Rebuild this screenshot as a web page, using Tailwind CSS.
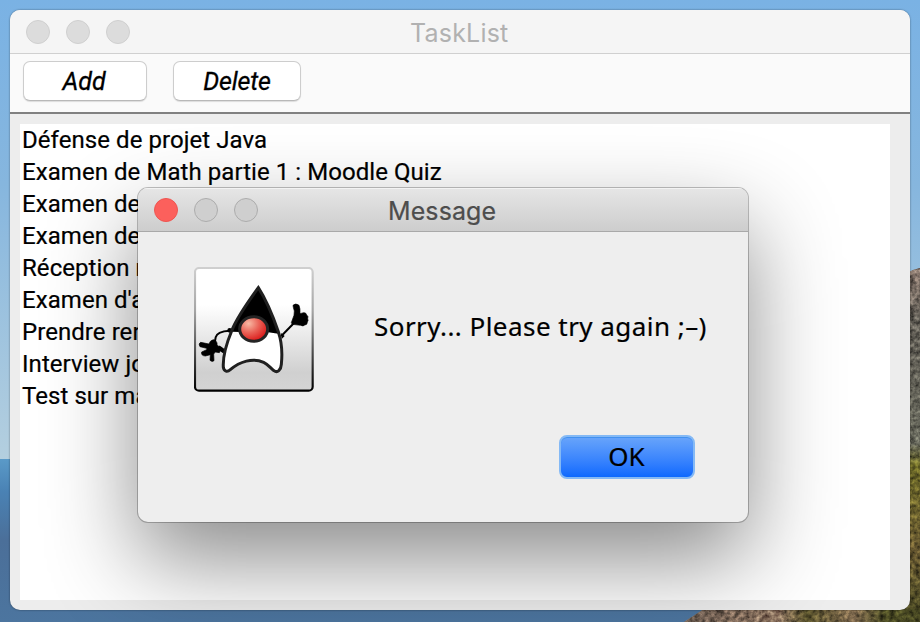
<!DOCTYPE html>
<html lang="fr">
<head>
<meta charset="utf-8">
<title>TaskList</title>
<script src="https://cdn.jsdelivr.net/npm/@tailwindcss/browser@4"></script>
</head>
<body class="w-[920px] h-[622px] overflow-hidden font-[Roboto,sans-serif] text-black">
<div class="relative w-[920px] h-[622px] overflow-hidden p-[10px]">
  <!-- desktop wallpaper -->
  <svg class="absolute inset-0" width="920" height="622" viewBox="0 0 920 622">
    <defs>
      <linearGradient id="sky" x1="0" y1="0" x2="0" y2="1"><stop offset="0" stop-color="#7ab2e4"/><stop offset=".4" stop-color="#86b6de"/><stop offset="1" stop-color="#b4cfdf"/></linearGradient>
      <linearGradient id="sea" x1="0" y1="0" x2="0" y2="1"><stop offset="0" stop-color="#5a9ac8"/><stop offset=".2" stop-color="#4a82b4"/><stop offset=".5" stop-color="#4b6f99"/><stop offset="1" stop-color="#4c759f"/></linearGradient>
      <linearGradient id="hill" gradientUnits="userSpaceOnUse" x1="0" y1="265" x2="0" y2="622"><stop offset="0" stop-color="#86746a"/><stop offset=".15" stop-color="#625e56"/><stop offset=".5" stop-color="#65665a"/><stop offset=".56" stop-color="#696626"/><stop offset=".8" stop-color="#65562f"/><stop offset="1" stop-color="#4c4c24"/></linearGradient>
      <linearGradient id="cliff"><stop offset="0" stop-color="#6b5b50"/><stop offset=".4" stop-color="#8d7460"/><stop offset=".52" stop-color="#59522c"/><stop offset=".72" stop-color="#7a654b"/><stop offset=".85" stop-color="#484822"/><stop offset="1" stop-color="#484822"/></linearGradient>
      <filter id="grain" x="0" y="0" width="1" height="1" color-interpolation-filters="sRGB"><feTurbulence type="fractalNoise" baseFrequency=".2" numOctaves="4" seed="4"/><feColorMatrix values=".8 0 0 0 .1  .8 0 0 0 .1  .8 0 0 0 .1  0 0 0 0 1"/><feComposite in2="SourceGraphic" operator="in" result="n"/><feBlend in="n" in2="SourceGraphic" mode="overlay"/></filter>
    </defs>
    <rect width="920" height="460" fill="url(#sky)"/>
    <rect y="459" width="920" height="163" fill="url(#sea)"/>
    <path d="M905 274L913 270 920 268V622H905z" fill="url(#hill)" filter="url(#grain)"/>
    <path d="M684 622L704 609H920V622z" fill="url(#cliff)" filter="url(#grain)"/>
  </svg>

  <!-- main window -->
  <main class="relative flex h-[600px] w-[900px] flex-col overflow-hidden rounded-[10px] bg-[#ededed] shadow-[0_0_2px_rgba(0,0,0,.5)]">
    <header class="flex h-[44px] shrink-0 items-center border-b border-[#d0d0d0] bg-[#f5f5f5] pl-[16px]">
      <div class="flex gap-[16px]">
        <i class="size-[24px] rounded-full border border-[#cfcfcf] bg-[#dcdcdc]"></i>
        <i class="size-[24px] rounded-full border border-[#cfcfcf] bg-[#dcdcdc]"></i>
        <i class="size-[24px] rounded-full border border-[#cfcfcf] bg-[#dcdcdc]"></i>
      </div>
      <h1 class="ml-[280px] mt-[3px] whitespace-nowrap font-[Inter,sans-serif] text-[25px] leading-[30px] tracking-[0.2px] text-[#b1b1b1]">TaskList</h1>
    </header>
    <nav class="flex h-[60px] shrink-0 gap-[26px] border-b-2 border-[#808080] bg-[#fafafa] pl-[13px] pt-[7px]">
      <button class="h-[40px] w-[124px] rounded-[7px] border border-[#cdcdcd] border-b-[#b8b8b8] bg-white pt-px pr-[2px] text-[25px] italic leading-[38px] shadow-[0_1px_1px_rgba(0,0,0,.12)] [-webkit-text-stroke:0.3px_#000]">Add</button>
      <button class="h-[40px] w-[128px] rounded-[7px] border border-[#cdcdcd] border-b-[#b8b8b8] bg-white pt-px text-[25px] italic leading-[38px] tracking-[-0.1px] shadow-[0_1px_1px_rgba(0,0,0,.12)] [-webkit-text-stroke:0.3px_#000]">Delete</button>
    </nav>
    <ul class="mt-[10px] ml-[10px] h-[476px] w-[870px] overflow-hidden whitespace-nowrap bg-white pl-[2px] text-[24px] leading-[32px] tracking-[0.06px] [-webkit-text-stroke:0.2px_#000]">
      <li>Défense de projet Java</li>
      <li>Examen de Math partie 1 : Moodle Quiz</li>
      <li>Examen de</li>
      <li>Examen de</li>
      <li>Réception n</li>
      <li>Examen d'a</li>
      <li>Prendre ren</li>
      <li>Interview jo</li>
      <li>Test sur ma</li>
    </ul>
  </main>

  <!-- message dialog -->
  <section class="absolute left-[138px] top-[188px] flex h-[334px] w-[610px] flex-col overflow-hidden rounded-[10px] bg-[#eee] shadow-[0_0_0_1px_rgba(0,0,0,.24),0_38px_90px_rgba(0,0,0,.46)]">
    <header class="flex h-[44px] shrink-0 items-center border-b border-[#a9a9a9] bg-linear-to-b from-[#e6e6e6] to-[#cdcdcd] pl-[16px] shadow-[inset_0_1px_0_#f3f3f3]">
      <div class="flex gap-[16px]">
        <i class="size-[24px] rounded-full border border-[#ee5551] bg-[#fc605c]"></i>
        <i class="size-[24px] rounded-full border border-[#acacac] bg-[#cfcfcf]"></i>
        <i class="size-[24px] rounded-full border border-[#acacac] bg-[#cfcfcf]"></i>
      </div>
      <h2 class="ml-[130px] mt-[3px] whitespace-nowrap font-[Inter,sans-serif] text-[25px] leading-[30px] tracking-[0.1px] text-[#4d4d4d] [-webkit-text-stroke:0.2px_#4d4d4d]">Message</h2>
    </header>
    <div class="flex pl-[56px] pt-[35px]">
      <svg class="shrink-0" width="120" height="125" viewBox="42 36 360 375">
        <defs>
          <linearGradient id="face" x1="0" y1="0" x2="0" y2="1"><stop offset=".3" stop-color="#fff"/><stop offset=".85" stop-color="#d0d0d0"/><stop offset="1" stop-color="#d4d4d4"/></linearGradient>
          <linearGradient id="edge" x1="0" y1="0" x2="0" y2="1"><stop offset="0" stop-color="#cfcfcf"/><stop offset=".35" stop-color="#a4a4a4"/><stop offset=".8" stop-color="#303030"/><stop offset="1" stop-color="#000"/></linearGradient>
          <radialGradient id="nose" cx=".32" cy=".28" r=".75"><stop offset="0" stop-color="#f8b9a4"/><stop offset=".5" stop-color="#e96156"/><stop offset="1" stop-color="#da1717"/></radialGradient>
        </defs>
        <rect x="45" y="39" width="353" height="368" rx="12" fill="url(#face)" stroke="url(#edge)" stroke-width="6.5"/>
        <path d="M149 227Q111 229 107 247L104 264" fill="none" stroke="#000" stroke-width="6"/>
        <path d="M134 290L115 277" stroke="#000" stroke-width="13"/>
        <circle cx="149" cy="226" r="7"/>
        <path d="M100 254C108 255 113 263 111 270L124 280 118 293 106 291 101 297 102 317Q96 322 90 316L91 299 76 303Q62 302 65 291L80 284 80 280 60 275Q54 266 62 262L87 267Q90 256 100 254Z" stroke="#000" stroke-width="2"/>
        <path d="M304 243L345 201" stroke="#000" stroke-width="6"/>
        <path d="M303 234L314 243 305 252Z"/>
        <path d="M339 151Q347 143 357 151Q361 160 360 176L371 173Q378 172 380 180Q386 184 383 191Q386 197 382 201Q382 210 374 210Q370 215 362 211L337 208 334 203 342 181Q345 167 340 157Z" stroke="#000" stroke-width="2"/>
        <path d="M235 98C201 145 168 192 155 228C142 259 128 303 130 337C132 350 142 352 151 344C179 320 218 307 251 322C264 328 272 340 282 347C292 355 303 345 304 328C308 290 306 263 295 230C281 190 257 132 235 98Z" fill="#fff"/>
        <path d="M235 98C201 145 168 192 155 230L181 231Q220 210 265 232L295 236C281 190 257 132 235 98Z"/>
        <path d="M235 98C201 145 168 192 155 228C142 259 128 303 130 337C132 350 142 352 151 344C179 320 218 307 251 322C264 328 272 340 282 347C292 355 303 345 304 328C308 290 306 263 295 230C281 190 257 132 235 98Z" fill="none" stroke="#202020" stroke-width="9"/>
        <ellipse cx="221" cy="222" rx="42" ry="37" fill="url(#nose)" stroke="#242424" stroke-width="9"/>
      </svg>
      <p class="ml-[60px] mt-[41px] whitespace-nowrap font-['Noto_Sans',sans-serif] text-[26px] leading-[36px] tracking-[0.46px] [-webkit-text-stroke:0.2px_#000]">Sorry... Please try again ;–)</p>
    </div>
    <button class="ml-[421px] mt-[43px] h-[44px] w-[136px] shrink-0 rounded-[8px] border-2 border-[#84b9f5] bg-linear-to-b from-[#6ca7fa] to-[#0265fe] bg-origin-border pb-[2px] pr-px font-['Noto_Sans',sans-serif] text-[26px] leading-[38px] shadow-[inset_0_1px_0_#4291f0] [-webkit-text-stroke:0.2px_#000]">OK</button>
  </section>
</div>
</body>
</html>
